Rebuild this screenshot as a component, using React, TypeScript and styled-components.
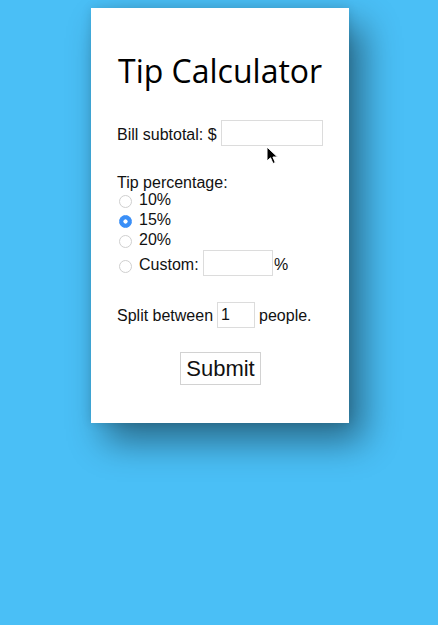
import React from "react";
import styled, { createGlobalStyle } from "styled-components";

const Global = createGlobalStyle`
  html, body {
    margin: 0;
    padding: 0;
    background: #4abff6;
  }
  body {
    height: 625px;
    overflow: hidden;
    font-family: "Liberation Sans", Arial, sans-serif;
  }
`;

const Page = styled.div`
  position: relative;
  padding-top: 8px;
  display: flex;
  justify-content: center;
`;

const Card = styled.form`
  width: 258px;
  height: 415px;
  box-sizing: border-box;
  margin-left: 2px;
  padding: 43px 0 0 26px;
  background: #ffffff;
  box-shadow: 14px 18px 34px rgba(0, 0, 0, 0.45), 0 0 10px rgba(0, 0, 0, 0.12);
  display: flex;
  flex-direction: column;
  align-items: flex-start;
  color: #111;
  font-size: 16px;
`;

const Title = styled.h1`
  margin: 0 0 0 1px;
  font-family: "Open Sans", "Noto Sans", sans-serif;
  font-weight: 400;
  font-size: 32px;
  line-height: 40px;
  color: #000;
`;

const Row = styled.div<{ $top: number; $gap?: number }>`
  display: flex;
  align-items: flex-start;
  gap: ${(p) => p.$gap ?? 4}px;
  margin-top: ${(p) => p.$top}px;
  height: 26px;
`;

const Label = styled.span<{ $offset?: number; $ml?: number }>`
  line-height: 20px;
  margin-top: ${(p) => p.$offset ?? 4}px;
  margin-left: ${(p) => p.$ml ?? 0}px;
  white-space: pre;
`;

const TextInput = styled.input<{ $w: number; $ml?: number }>`
  width: ${(p) => p.$w}px;
  height: 26px;
  box-sizing: border-box;
  margin: 0 0 0 ${(p) => p.$ml ?? 0}px;
  padding: 1px 3px;
  border: 1px solid #dcdcdc;
  border-radius: 0;
  font-family: "Liberation Sans", Arial, sans-serif;
  font-size: 16px;
  color: #111;
  outline: none;
  background: #fff;
`;

const Heading = styled.div`
  margin-top: 28px;
  line-height: 18px;
`;

const RadioRow = styled.label`
  display: flex;
  align-items: flex-start;
  gap: 7px;
  height: 20px;
  margin-left: 2px;
`;

const RadioText = styled.span`
  line-height: 14px;
  margin-top: 1px;
`;

const Radio = styled.input.attrs({ type: "radio" })<{ $top?: number }>`
  appearance: none;
  -webkit-appearance: none;
  width: 13px;
  height: 13px;
  box-sizing: border-box;
  margin: ${(p) => p.$top ?? 3}px 0 0 0;
  border-radius: 50%;
  border: 1px solid #cfcfcf;
  background: #fff;
  flex: none;
  &:checked {
    border-color: #3a8ff7;
    background: radial-gradient(circle, #ffffff 0 1.8px, #3a8ff7 2.4px);
  }
`;

const CustomRow = styled.div`
  display: flex;
  align-items: flex-start;
  height: 26px;
  margin-top: -2px;
  margin-left: 2px;
`;

const Actions = styled.div`
  align-self: stretch;
  display: flex;
  justify-content: center;
  margin: 24px 0 0 -26px;
`;

const Submit = styled.button`
  height: 33px;
  padding: 0 5px;
  margin: 0 0 0 1px;
  border: 1px solid #d2d2d2;
  border-radius: 0;
  background: #fff;
  font-family: "Liberation Sans", Arial, sans-serif;
  font-size: 22px;
  color: #111;
  line-height: 31px;
`;

const Cursor = styled.svg`
  position: absolute;
  left: 266px;
  top: 146px;
  width: 13px;
  height: 19px;
`;

export default function App() {
  return (
    <>
      <Global />
      <Page>
        <Card onSubmit={(e) => e.preventDefault()}>
          <Title>Tip Calculator</Title>
          <Row $top={29} $gap={4}>
            <Label $offset={5}>Bill subtotal: $</Label>
            <TextInput $w={102} />
          </Row>
          <Heading>Tip percentage:</Heading>
          <RadioRow>
            <Radio name="tip" />
            <RadioText>10%</RadioText>
          </RadioRow>
          <RadioRow>
            <Radio name="tip" defaultChecked />
            <RadioText>15%</RadioText>
          </RadioRow>
          <RadioRow>
            <Radio name="tip" />
            <RadioText>20%</RadioText>
          </RadioRow>
          <CustomRow>
            <Radio name="tip" $top={10} />
            <Label $ml={7} $offset={5}>Custom: </Label>
            <TextInput $w={70} />
            <Label $ml={1} $offset={5}>%</Label>
          </CustomRow>
          <Row $top={26}>
            <Label>Split between</Label>
            <TextInput $w={38} defaultValue="1" />
            <Label>people.</Label>
          </Row>
          <Actions>
            <Submit type="submit">Submit</Submit>
          </Actions>
        </Card>
        <Cursor viewBox="0 0 13 19">
          <path
            d="M1 1 L1 15 L4.5 11.8 L7 17.5 L9.3 16.5 L6.9 11 L11.5 11 Z"
            fill="#000"
            stroke="#fff"
            strokeWidth="1"
            strokeLinejoin="round"
          />
        </Cursor>
      </Page>
    </>
  );
}
